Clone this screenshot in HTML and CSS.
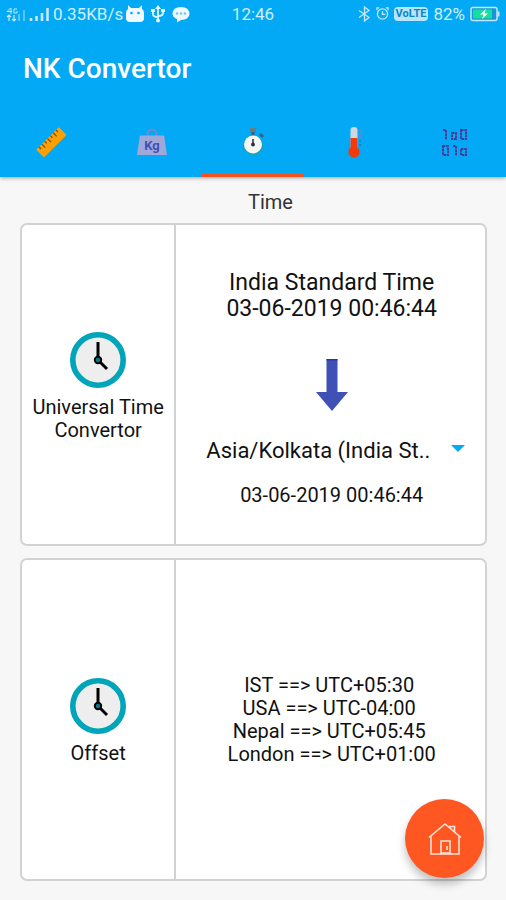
FILE: index.html
```html
<!DOCTYPE html>
<html lang="en">
<head>
<meta charset="utf-8">
<meta name="viewport" content="width=device-width, initial-scale=1">
<title>NK Convertor</title>
<link rel="stylesheet" href="styles.css">
</head>
<body>
<header class="app-header">
  <div class="status">
    <div class="status-side">
      <svg width="44" height="16" viewBox="0 0 44 16" fill="none" stroke="#c4e9fc" aria-hidden="true">
        <path d="M1 5.500h5M5 2v6M4.500 2L1 5.500M11 3H8v4h3V5" stroke-width="1"/>
        <path d="M3 15V9M1 11l2-2 2 2M8 9v6M6 13l2 2 2-2" stroke-width="1.200"/>
        <path d="M13 15V8M18 15V4" stroke-width="2" opacity=".45"/>
        <path d="M25 15v-3M30.500 15v-5M36 15V7M41.500 15V2" stroke-width="2.600"/>
      </svg>
      <span>0.35KB/s</span>
      <svg width="18" height="18" viewBox="0 0 18 18" aria-hidden="true">
        <path d="M2 0l3 3h8l3-3v4q2 1 2 4v5q0 4-4 4H4q-4 0-4-4V8q0-3 2-4z" fill="#eefaff"/>
        <circle cx="5.500" cy="8" r="1.300" fill="#03a9f4"/><circle cx="12.500" cy="8" r="1.300" fill="#03a9f4"/>
      </svg>
      <svg class="gap-left" width="14" height="18" viewBox="0 0 14 18" fill="none" stroke="#e4f6ff" stroke-width="1.800" aria-hidden="true">
        <path d="M7 3v12M2 6v3q0 3 5 3M12 6v2q0 3-5 3"/>
        <path d="M4 4l3-4 3 4zM0 4h4v3H0zM10 4h4v3h-4z" fill="#e4f6ff" stroke="none"/><circle cx="7" cy="15.500" r="2" fill="#e4f6ff" stroke="none"/>
      </svg>
      <svg class="gap-left" width="18" height="17" viewBox="0 0 18 17" aria-hidden="true">
        <path d="M9 1c5 0 8.500 2.800 8.500 6.500S14 14 9 14l-4 2.500V13C2 12 .5 10 .5 7.500.5 3.800 4 1 9 1z" fill="#eefaff"/>
        <g fill="#6cc8f5"><circle cx="5" cy="7.500" r="1.300"/><circle cx="9" cy="7.500" r="1.300"/><circle cx="13" cy="7.500" r="1.300"/></g>
      </svg>
    </div>
    <time>12:46</time>
    <div class="status-side status-end">
      <svg width="13" height="16" viewBox="0 0 13 16" fill="none" stroke="#c4e9fc" stroke-width="1.300" aria-hidden="true"><path d="M1 4.500l10 7L6.500 15V1L11 4.500l-10 7"/></svg>
      <svg width="13" height="16" viewBox="0 0 14 16" fill="none" stroke="#c4e9fc" stroke-width="1.400" aria-hidden="true"><circle cx="7" cy="8" r="5.500"/><path d="M7 5v3.500h3M1 4V1.500h2.500M13 4V1.500h-2.500"/></svg>
      <span class="volte">VoLTE</span>
      <span>82%</span>
      <svg class="battery" width="30" height="16" viewBox="0 0 30 16" aria-hidden="true">
        <rect x="1" y="1.500" width="26" height="13" rx="2" fill="#1a94d8" stroke="#c4e9fc" stroke-width="1.500"/>
        <path d="M3 3.500h19v9H3z" fill="#13dfa0"/><path d="M27.500 5.500h2v5h-2z" fill="#c4e9fc"/>
        <path d="M16 3l-6 5.500h3.500L12 13l6-5.500h-3.500z" fill="#fff"/>
      </svg>
    </div>
  </div>
  <h1>NK Convertor</h1>
  <nav class="tabs" aria-label="Converters">
    <button class="tab" aria-label="Length">
      <svg width="32" height="32" viewBox="0 0 32 32">
        <g transform="rotate(-45 16 16)"><rect x="0" y="11" width="32" height="11" rx="1" fill="#ffa000"/>
        <path d="M4 11v3M8 11v5M12 11v3M16 11v5M20 11v3M24 11v5M28 11v3" stroke="#7a5520" stroke-width="1.300"/></g>
      </svg>
    </button>
    <button class="tab" aria-label="Weight">
      <svg width="32" height="32" viewBox="0 0 32 32">
        <path d="M11.500 10Q11 3.500 16 3.500T20.500 10" fill="none" stroke="#7986cb" stroke-width="1.800"/>
        <path d="M5 9.500h22q1 0 1.300 1L31 29H1L3.700 10.500q.3-1 1.300-1z" fill="#9fa8da"/>
        <text class="kg" x="16" y="24" text-anchor="middle">Kg</text>
      </svg>
    </button>
    <button class="tab active" aria-label="Time">
      <svg width="32" height="32" viewBox="0 0 32 32">
        <path d="M13 2h6v4h-6z" fill="#607d8b"/><path d="M14.500 6h3v3h-3z" fill="#455a64"/>
        <path d="M23 8l3 3" stroke="#37618a" stroke-width="3"/>
        <circle cx="16" cy="19" r="10" fill="#12a99d"/><circle cx="16" cy="18.500" r="9" fill="#f5f8f7"/>
        <path d="M16 13v6" stroke="#263238" stroke-width="1.500"/><circle cx="16" cy="18.500" r="1.900" fill="#263238"/>
      </svg>
    </button>
    <button class="tab" aria-label="Temperature">
      <svg width="32" height="32" viewBox="0 0 32 32">
        <path d="M12.500 4q0-3 3.500-3t3.500 3v20h-7z" fill="#cfd8dc"/><path d="M12.500 12h7v12h-7z" fill="#f4390d"/><circle cx="16" cy="26" r="5.700" fill="#f4390d"/>
        <path d="M21 5h3M21 8h3M21 11h3" stroke="#a76fae" stroke-width="1.500"/><path d="M21 15h2M21 19h2" stroke="#187fb5" stroke-width="1.500"/>
      </svg>
    </button>
    <button class="tab" aria-label="Number systems">
      <svg width="32" height="32" viewBox="0 0 32 32" fill="none" stroke="#4a3a96" stroke-width="2" stroke-dasharray="2.500 .7">
        <path d="M4 4h3v10M13 7h4v6h-4zM22 4h5v9h-5zM4 20h5v9H4zM14 20h3v10M22 23h5v6h-5z"/>
      </svg>
    </button>
  </nav>
</header>

<main class="content">
  <h2>Time</h2>
  <section class="card">
    <div class="label">
      <svg width="56" height="56" viewBox="0 0 56 56" aria-hidden="true"><circle cx="28" cy="28" r="25.200" fill="#eee" stroke="#00a5b9" stroke-width="5.600"/><path d="M28 10v18l9 9" fill="none" stroke="#000" stroke-width="3"/><circle cx="28" cy="28" r="3.200" fill="#08798a" stroke="#000" stroke-width="2"/></svg>
      <label for="zone">Universal Time Convertor</label>
    </div>
    <div class="body">
      <p class="source">India Standard Time<br>03-06-2019 00:46:44</p>
      <svg width="32" height="54" viewBox="0 0 32 54" aria-hidden="true"><path d="M10.500 1h11v33H32L16 53 0 34h10.500z" fill="#3f51b5"/><path d="M10.500 1h11v1.500h-11z" fill="#2638a8"/></svg>
      <div class="picker">
        <select id="zone"><option>Asia/Kolkata (India St..</option></select>
      </div>
      <output for="zone">03-06-2019 00:46:44</output>
    </div>
  </section>
  <section class="card">
    <div class="label">
      <svg width="56" height="56" viewBox="0 0 56 56" aria-hidden="true"><circle cx="28" cy="28" r="25.200" fill="#eee" stroke="#00a5b9" stroke-width="5.600"/><path d="M28 10v18l9 9" fill="none" stroke="#000" stroke-width="3"/><circle cx="28" cy="28" r="3.200" fill="#08798a" stroke="#000" stroke-width="2"/></svg>
      <span>Offset</span>
    </div>
    <div class="body body-center">
      <p class="offsets">IST ==&gt; UTC+05:30 
USA ==&gt; UTC-04:00 
Nepal ==&gt; UTC+05:45 
London ==&gt; UTC+01:00</p>
    </div>
  </section>
</main>

<button class="fab" aria-label="Home">
  <svg width="34" height="34" viewBox="0 0 34 34" fill="none" stroke="#ffe3d8" stroke-width="1.600"><path d="M1 15.500L17 2l16 13.500M3 14v18h28V14M22 6V4.500h4.500V10M13 32V19h9v13M13 31h9M19 24v4"/></svg>
</button>
</body>
</html>
```

FILE: styles.css
```css
* {
  box-sizing: border-box;
}

body {
  margin: 0;
  min-height: 100vh;
  display: flex;
  flex-direction: column;
  background: #f7f7f7;
  color: #111;
  font-family: Roboto, "Liberation Sans", sans-serif;
  font-size: 20px;
  line-height: 23px;
}

h1, h2, p {
  margin: 0;
}

svg {
  display: block;
  flex: none;
}

.app-header {
  background: #03a9f4;
  color: #fff;
  box-shadow: 0 1px 4px rgba(0, 0, 0, 0.35);
}

.status {
  display: grid;
  grid-template-columns: 1fr auto 1fr;
  align-items: center;
  height: 28px;
  padding: 0 6px;
  color: #d0eefd;
  font-size: 17px;
}

.status-side {
  display: flex;
  align-items: center;
  gap: 3px;
}

.status-end {
  justify-content: flex-end;
  gap: 5px;
}

.gap-left {
  margin-left: 4px;
}

.volte {
  padding: 0 2px;
  border-radius: 4px;
  background: #b9e5fb;
  color: #0b86c9;
  font-size: 11px;
  font-weight: 700;
  line-height: 14px;
}

h1 {
  padding: 24px 23px;
  font-size: 28px;
  font-weight: 500;
  line-height: 34px;
}

.tabs {
  display: flex;
}

.tab {
  flex: 1;
  display: flex;
  justify-content: center;
  padding: 16px 0;
  border: 0;
  border-bottom: 3px solid transparent;
  background: none;
}

.tab.active {
  border-bottom-color: #f4511e;
}

.kg {
  fill: #3f51b5;
  font: 700 13px Roboto, sans-serif;
}

.content {
  flex: 1;
  display: grid;
  grid-template-rows: auto 1fr 1fr;
  row-gap: 12px;
  padding: 13px 19px 19px 20px;
}

h2 {
  margin: 0 0 -3px 34px;
  font-size: 20px;
  font-weight: 400;
  line-height: 24px;
  text-align: center;
  color: #333;
}

.card {
  display: grid;
  grid-template-columns: 1fr 2fr;
  border: 2px solid #d2d2d2;
  border-radius: 7px;
  background: #fff;
}

.label {
  display: flex;
  flex-direction: column;
  align-items: center;
  justify-content: center;
  gap: 8px;
  padding-top: 4px;
  border-right: 2px solid #d2d2d2;
  text-align: center;
}

.body {
  display: flex;
  flex-direction: column;
  align-items: center;
  padding: 45px 0 0 2px;
}

.body-center {
  justify-content: center;
  padding-top: 0;
}

.source {
  margin-bottom: 36px;
  font-size: 23px;
  line-height: 26px;
  text-align: center;
}

.picker {
  position: relative;
  align-self: stretch;
  margin: 21px 18px 17px 28px;
}

.picker::after {
  content: "";
  position: absolute;
  top: 12px;
  right: 2px;
  border: 7px solid transparent;
  border-top-color: #03a9f4;
  border-bottom: 0;
  pointer-events: none;
}

select {
  display: block;
  width: 100%;
  height: 34px;
  padding: 0;
  border: 0;
  appearance: none;
  background: none;
  color: #111;
  font: 22px Roboto, "Liberation Sans", sans-serif;
}

.offsets {
  white-space: pre;
  text-align: center;
}

.fab {
  position: fixed;
  right: 22px;
  bottom: 22px;
  display: grid;
  place-items: center;
  width: 79px;
  height: 79px;
  padding: 0;
  border: 0;
  border-radius: 50%;
  background: #ff5722;
  box-shadow: 0 6px 8px rgba(0, 0, 0, 0.25);
}
```
